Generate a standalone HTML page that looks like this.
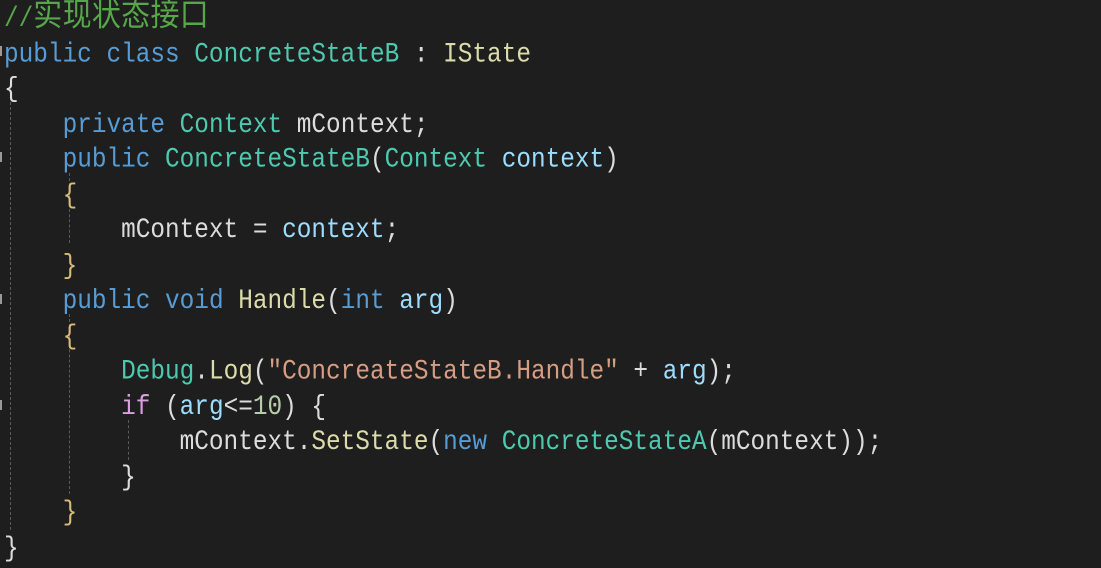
<!DOCTYPE html>
<html><head><meta charset="utf-8"><style>
html,body{margin:0;padding:0;background:#1e1e1e;width:1101px;height:568px;overflow:hidden}
.c{position:absolute;left:4px;top:2px;font-family:"Liberation Mono","Noto Sans CJK SC",monospace;font-size:24.4px;line-height:31.52px;color:#dcdcdc;white-space:pre;transform:scaleY(1.12);transform-origin:0 0}
.k{color:#569cd6}.t{color:#4ec9b0}.cm{color:#57a64a}.s{color:#d69d85}.m{color:#dcdcaa}.p{color:#9cdcfe}.i{color:#d8a0df}.b{color:#d7ba7d}
.g{position:absolute;width:0;border-left:1px dashed #5a5a5a}
.mk{position:absolute;left:0;width:2px;height:10px;background:#9a9a9a}
.cj{font-size:29px;line-height:20px;letter-spacing:0.3px}
</style></head><body>
<div class="g" style="left:10px;top:102px;height:428px"></div>
<div class="g" style="left:69px;top:173px;height:70px"></div>
<div class="g" style="left:69px;top:314px;height:180px"></div>
<div class="g" style="left:128px;top:420px;height:40px"></div>
<div class="mk" style="top:46px"></div>
<div class="mk" style="top:152px"></div>
<div class="mk" style="top:294px"></div>
<div class="mk" style="top:400px"></div>
<div class="c"><span class="cm">//<span class="cj">实现状态接口</span></span>
<span class="k">public</span> <span class="k">class</span> <span class="t">ConcreteStateB</span> : <span class="m">IState</span>
{
    <span class="k">private</span> <span class="t">Context</span> mContext;
    <span class="k">public</span> <span class="t">ConcreteStateB</span>(<span class="t">Context</span> <span class="p">context</span>)
    <span class="b">{</span>
        mContext = <span class="p">context</span>;
    <span class="b">}</span>
    <span class="k">public</span> <span class="k">void</span> <span class="m">Handle</span>(<span class="k">int</span> <span class="p">arg</span>)
    <span class="b">{</span>
        <span class="t">Debug</span>.<span class="m">Log</span>(<span class="s">"ConcreateStateB.Handle"</span> + <span class="p">arg</span>);
        <span class="i">if</span> (<span class="p">arg</span>&lt;=<span style="color:#b5cea8">10</span>) {
            mContext.<span class="m">SetState</span>(<span class="k">new</span> <span class="t">ConcreteStateA</span>(mContext));
        }
    <span class="b">}</span>
}</div>
</body></html>
